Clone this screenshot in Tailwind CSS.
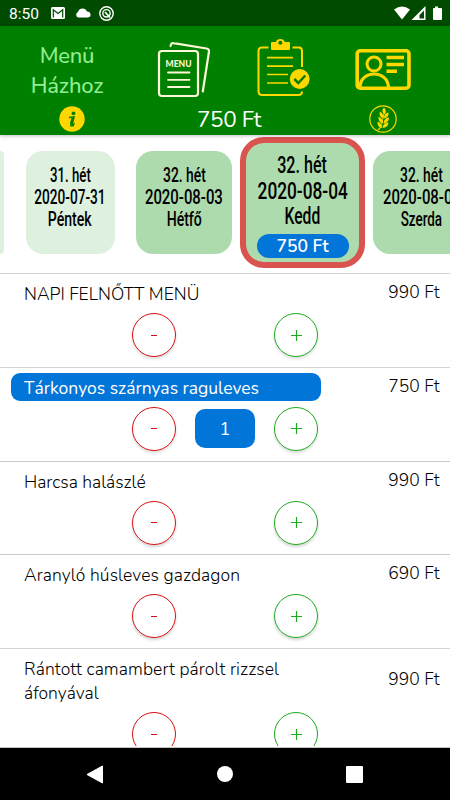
<!DOCTYPE html>
<html lang="hu">
<head>
<meta charset="utf-8">
<title>Menü Házhoz</title>
<script src="https://cdn.jsdelivr.net/npm/@tailwindcss/browser@4"></script>
</head>
<body class="w-[450px] h-[800px] overflow-hidden flex flex-col bg-white font-['Nunito','Lato',sans-serif] text-black">
<div class="h-[26px] shrink-0 bg-[#004b00] flex items-center pl-[9px] pr-[8px] text-white font-[Roboto,sans-serif]">
  <span class="text-[15.5px] leading-[26px] w-[42px] pt-px">8:50</span>
  <svg class="w-[14px] h-[12px]" viewBox="0 0 14 12"><rect width="14" height="12" rx="1.5" fill="#fff"/><path d="M2.300 10.500V2.800L7 6.500L11.700 2.800V10.500" fill="none" stroke="#004b00" stroke-width="1.2"/></svg>
  <svg class="w-[16px] h-[10px] ml-[9.500px]" viewBox="0 0 16 10"><path d="M3 9.500A3 3 0 0 1 3 4A4.800 4.800 0 0 1 12 3.500A3 3 0 0 1 13 9.500Z" fill="#fff"/></svg>
  <svg class="w-[15px] h-[15px] ml-[8.500px]" viewBox="0 0 15 15" fill="none" stroke="#fff"><circle cx="7.500" cy="7.500" r="6.700" stroke-width="1.400"/><circle cx="7.500" cy="7.300" r="3.700" stroke-width="1.400"/><path d="M6 6L11 11.500" stroke-width="1.800"/></svg>
  <svg class="w-[48px] h-[16px] ml-auto" viewBox="0 0 48 16" fill="#fff"><path d="M0 4.500Q8 -1.500 16 4.500L8 14.500Z"/><path fill-rule="evenodd" d="M31.500 1V15H17.500ZM30 5.500L25.500 10V13.500H30Z"/><path d="M41 1.500h3V3h3q1 0 1 1v10q0 1-1 1h-7q-1 0-1-1V4q0-1 1-1h1Z"/></svg>
</div>
<header class="h-[109px] shrink-0 bg-[#008000] relative shadow-[0_1px_4px_rgba(0,0,0,0.25)]">
  <div class="grid grid-cols-[134px_100px_100px_99px] h-[78px]">
    <h1 class="text-center text-[#90ee90] text-[22px] font-medium leading-[30px] pt-[15px]"><span class="block tracking-[-0.3px]">Menü</span><span class="block tracking-[-0.2px]">Házhoz</span></h1>
    <svg class="w-[54px] h-[58px] mt-[14px] ml-[23px]" viewBox="157 40 54 58" fill="none" stroke="#fff8d6" stroke-width="2.200" stroke-linecap="round" stroke-linejoin="round">
      <rect x="159" y="51" width="39" height="45" rx="3"/>
      <path d="M170.500 46L171 44.500Q171.500 42.800 173.500 43.200L206.500 48.500Q209.300 49 209 51.500L202.800 91.500"/>
      <path d="M168 72.500H189.500M168 79.800H189.500M168 87H189.500" stroke-width="1.800"/>
      <text x="165.500" y="66.500" textLength="26" lengthAdjust="spacingAndGlyphs" font-family="Lato" font-size="9.800" font-weight="900" fill="#fff8d6" stroke="none">MENU</text>
    </svg>
    <svg class="w-[56px] h-[60px] mt-[12px] ml-[22px]" viewBox="256 38 56 60" fill="none" stroke="#ffd700" stroke-width="2">
      <path d="M268.500 47.500H262Q258.500 47.500 258.500 51V91Q258.500 95 262 95H298Q302 95 302 91.500M292.500 47.500H299Q302 47.500 302 51V67"/>
      <path fill-rule="evenodd" fill="#ffd700" stroke="none" d="M272 42H276Q276.500 39 280.300 39Q284 39 284.700 42H289Q290 42 290 43V49Q290 50 289 50H272Q271 50 271 49V43Q271 42 272 42ZM280.300 40.800A2 2 0 1 0 280.400 40.800Z"/>
      <path d="M267 57.700H293M267 66.200H293M267 74.500H288M267 83H288" stroke-width="1.700"/>
      <circle cx="299.700" cy="79" r="9.900" fill="#ffd700" stroke="none"/>
      <path d="M294.300 79L298.300 83L305.300 75.500" stroke="#008000" stroke-width="2.500"/>
    </svg>
    <svg class="w-[56px] h-[42px] mt-[23px] ml-[21px]" viewBox="355 49 56 42" fill="none" stroke="#ffd700" stroke-width="3.600">
      <rect x="357.200" y="50.800" width="51.800" height="37.400" rx="3"/>
      <circle cx="374" cy="64" r="7" stroke-width="3"/>
      <path d="M360 87.500C360 69.500 388 69.500 388.500 87.500" stroke-width="3.200"/>
      <path d="M386.500 57.500H404M386.500 64.500H404M386.500 71.200H397" stroke-width="3.400"/>
    </svg>
  </div>
  <div class="grid grid-cols-[143px_172px_136px] h-[29px] items-center justify-items-center">
    <svg class="w-[26px] h-[26px]" viewBox="0 0 26 26"><circle cx="13" cy="13" r="12.700" fill="#ffd700"/><circle cx="14.500" cy="7.300" r="1.900" fill="#008000"/><path d="M10 11.500L15 10.800L13.200 17.800Q13 19 15.800 17.600" fill="none" stroke="#008000" stroke-width="1.500"/><path d="M14 11.500L12.300 18.500" stroke="#008000" stroke-width="3"/><path d="M11 19.500H15" stroke="#008000" stroke-width="1.800"/></svg>
    <span class="text-white text-[22.500px] leading-[29px] tracking-[-0.4px] pt-px">750 Ft</span>
    <svg class="w-[28px] h-[28px]" viewBox="0 0 28 28"><circle cx="14" cy="14" r="13.200" fill="none" stroke="#ffd700" stroke-width="1.200"/><g fill="#ffd700"><path d="M15 2.500Q18.500 6 15.500 9.500Q11.500 6 15 2.500ZM14.500 13.500Q9.500 12 10.800 6.500Q15 8.500 14.500 13.500ZM15 13.500Q15 8 19.500 7.500Q20 12.500 15 13.500ZM14 18.500Q9 17.500 9.500 11.500Q14 13.500 14 18.500ZM14.500 18.500Q15 13 20 12.500Q20 17.500 14.500 18.500ZM13 23Q8 22 8.500 16.500Q13 18 13 23ZM13.500 23Q14 17.500 19.500 17.500Q19 22.500 13.500 23Z"/><path d="M15.500 8L12.500 22L9.500 25.500L8.500 24.500L12 21L14.500 8Z"/></g></svg>
  </div>
</header>
<section class="h-[138px] shrink-0 flex pt-[16px] overflow-hidden font-[Roboto,sans-serif] font-medium text-center">
  <div class="w-[4px] h-[103px] shrink-0 bg-[#def0de] rounded-r-[5px]"></div>
  <div class="ml-[21.500px] w-[89px] h-[103px] shrink-0 rounded-[17px] bg-[#def0de] pt-[13px] text-[21px] leading-[22px] flex flex-col items-center whitespace-nowrap">
    <span class="scale-x-[0.63]">31. hét</span><span class="scale-x-[0.65]">2020-07-31</span><span class="scale-x-[0.67]">Péntek</span>
  </div>
  <div class="ml-[21.500px] w-[96px] h-[103px] shrink-0 rounded-[17px] bg-[#addbad] pt-[13px] text-[21px] leading-[22px] flex flex-col items-center whitespace-nowrap">
    <span class="scale-x-[0.66]">32. hét</span><span class="scale-x-[0.71]">2020-08-03</span><span class="scale-x-[0.67]">Hétfő</span>
  </div>
  <div class="ml-[8px] -mt-[14px] w-[125px] h-[131px] shrink-0 rounded-[24px] border-[6px] border-[#d9534f] bg-[#addbad] pt-[10px] text-[24px] leading-[25.500px] flex flex-col items-center whitespace-nowrap">
    <span class="scale-x-[0.67]">32. hét</span><span class="scale-x-[0.72]">2020-08-04</span><span class="scale-x-[0.65]">Kedd</span>
    <span class="mt-[4px] w-[92px] h-[24px] shrink-0 rounded-[12px] bg-[#0275d8] text-white font-['Nunito','Lato',sans-serif] font-semibold text-[17.500px] leading-[25px]">750 Ft</span>
  </div>
  <div class="ml-[8px] w-[97px] h-[103px] shrink-0 rounded-[17px] bg-[#addbad] pt-[13px] text-[21px] leading-[22px] flex flex-col items-center whitespace-nowrap">
    <span class="scale-x-[0.66]">32. hét</span><span class="scale-x-[0.71]">2020-08-05</span><span class="scale-x-[0.64]">Szerda</span>
  </div>
</section>
<main class="h-[473px] shrink-0 overflow-hidden text-[17.500px] leading-[24px] font-light">
  <article class="h-[93.750px] border-t-[1.500px] border-[#d4d4d4] pt-[5px]">
    <div class="flex items-center justify-between pl-[11px] pr-[10.500px]"><p class="w-[310px] pl-[13px] pt-[3px] pb-px"><span>NAPI FELNŐTT MENÜ</span></p><span class="pb-[2px] text-[17.500px]">990 Ft</span></div>
    <div class="flex items-center pl-[132px] pt-[6px]">
      <button class="w-[44px] h-[44px] rounded-full border-[1.500px] border-[#d80f0f] flex items-center justify-center shadow-[0_2px_3px_rgba(0,0,0,0.14)]"><i class="w-[6px] h-px bg-[#d80f0f]"></i></button>
      <button class="ml-[98px] w-[44px] h-[44px] rounded-full border-[1.500px] border-[#1ea91e] flex items-center justify-center shadow-[0_2px_3px_rgba(0,0,0,0.14)]"><svg class="w-[11px] h-[11px]" viewBox="0 0 11 11"><path d="M0 5.500H11M5.500 0V11" stroke="#1ea91e" stroke-width="1.200"/></svg></button>
    </div>
  </article>
  <article class="h-[93.750px] border-t-[1.500px] border-[#d4d4d4] pt-[5px]">
    <div class="flex items-center justify-between pl-[11px] pr-[10.500px]"><p class="w-[310px] pl-[13px] pt-[3px] pb-px rounded-[9px] bg-[#0275d8] text-white font-normal"><span>Tárkonyos szárnyas raguleves</span></p><span class="pb-[2px] text-[17.500px]">750 Ft</span></div>
    <div class="flex items-center pl-[132px] pt-[6px]">
      <button class="w-[44px] h-[44px] rounded-full border-[1.500px] border-[#d80f0f] flex items-center justify-center shadow-[0_2px_3px_rgba(0,0,0,0.14)]"><i class="w-[6px] h-px bg-[#d80f0f]"></i></button>
      <span class="ml-[19px] w-[60px] h-[39px] rounded-[10px] bg-[#0275d8] text-white text-[18px] leading-[41px] text-center font-normal">1</span>
      <button class="ml-[19px] w-[44px] h-[44px] rounded-full border-[1.500px] border-[#1ea91e] flex items-center justify-center shadow-[0_2px_3px_rgba(0,0,0,0.14)]"><svg class="w-[11px] h-[11px]" viewBox="0 0 11 11"><path d="M0 5.500H11M5.500 0V11" stroke="#1ea91e" stroke-width="1.200"/></svg></button>
    </div>
  </article>
  <article class="h-[93.750px] border-t-[1.500px] border-[#c8c8c8] pt-[5px]">
    <div class="flex items-center justify-between pl-[11px] pr-[10.500px]"><p class="w-[310px] pl-[13px] pt-[3px] pb-px"><span>Harcsa halászlé</span></p><span class="pb-[2px] text-[17.500px]">990 Ft</span></div>
    <div class="flex items-center pl-[132px] pt-[6px]">
      <button class="w-[44px] h-[44px] rounded-full border-[1.500px] border-[#d80f0f] flex items-center justify-center shadow-[0_2px_3px_rgba(0,0,0,0.18)]"><i class="w-[6px] h-px bg-[#d80f0f]"></i></button>
      <button class="ml-[98px] w-[44px] h-[44px] rounded-full border-[1.500px] border-[#1ea91e] flex items-center justify-center shadow-[0_2px_3px_rgba(0,0,0,0.18)]"><svg class="w-[11px] h-[11px]" viewBox="0 0 11 11"><path d="M0 5.500H11M5.500 0V11" stroke="#1ea91e" stroke-width="1.200"/></svg></button>
    </div>
  </article>
  <article class="h-[93.750px] border-t-[1.500px] border-[#c8c8c8] pt-[5px]">
    <div class="flex items-center justify-between pl-[11px] pr-[10.500px]"><p class="w-[310px] pl-[13px] pt-[3px] pb-px"><span class="tracking-[0.1px]">Aranyló húsleves gazdagon</span></p><span class="pb-[2px] text-[17.500px]">690 Ft</span></div>
    <div class="flex items-center pl-[132px] pt-[6px]">
      <button class="w-[44px] h-[44px] rounded-full border-[1.500px] border-[#d80f0f] flex items-center justify-center shadow-[0_2px_3px_rgba(0,0,0,0.18)]"><i class="w-[6px] h-px bg-[#d80f0f]"></i></button>
      <button class="ml-[98px] w-[44px] h-[44px] rounded-full border-[1.500px] border-[#1ea91e] flex items-center justify-center shadow-[0_2px_3px_rgba(0,0,0,0.18)]"><svg class="w-[11px] h-[11px]" viewBox="0 0 11 11"><path d="M0 5.500H11M5.500 0V11" stroke="#1ea91e" stroke-width="1.200"/></svg></button>
    </div>
  </article>
  <article class="border-t-[1.500px] border-[#d4d4d4] pt-[5px]">
    <div class="flex items-center justify-between pl-[11px] pr-[10.500px]"><p class="w-[310px] pl-[13px] pt-[3px] pb-px whitespace-nowrap"><span class="block tracking-[0.1px]">Rántott camambert párolt rizzsel</span><span class="block">áfonyával</span></p><span class="pb-[2px] text-[17.500px]">990 Ft</span></div>
    <div class="flex items-center pl-[132px] pt-[6px]">
      <button class="w-[44px] h-[44px] rounded-full border-[1.500px] border-[#d80f0f] flex items-center justify-center"><i class="w-[6px] h-px bg-[#d80f0f]"></i></button>
      <button class="ml-[98px] w-[44px] h-[44px] rounded-full border-[1.500px] border-[#1ea91e] flex items-center justify-center"><svg class="w-[11px] h-[11px]" viewBox="0 0 11 11"><path d="M0 5.500H11M5.500 0V11" stroke="#1ea91e" stroke-width="1.200"/></svg></button>
    </div>
  </article>
</main>
<div class="h-[2px] shrink-0 border-b border-[#c4c4c4] bg-white"></div>
<nav class="h-[52px] shrink-0 bg-black grid grid-cols-[190px_70px_190px] items-center">
  <svg class="w-[17px] h-[19px] ml-[85.500px]" viewBox="0 0 17 19"><path d="M16.500 1V18L1 9.500Z" fill="#fff" stroke="#fff" stroke-linejoin="round"/></svg>
  <span class="w-[16px] h-[16px] rounded-full bg-white justify-self-center"></span>
  <span class="w-[17px] h-[17px] rounded-[1px] bg-white ml-[86px]"></span>
</nav>
</body>
</html>
